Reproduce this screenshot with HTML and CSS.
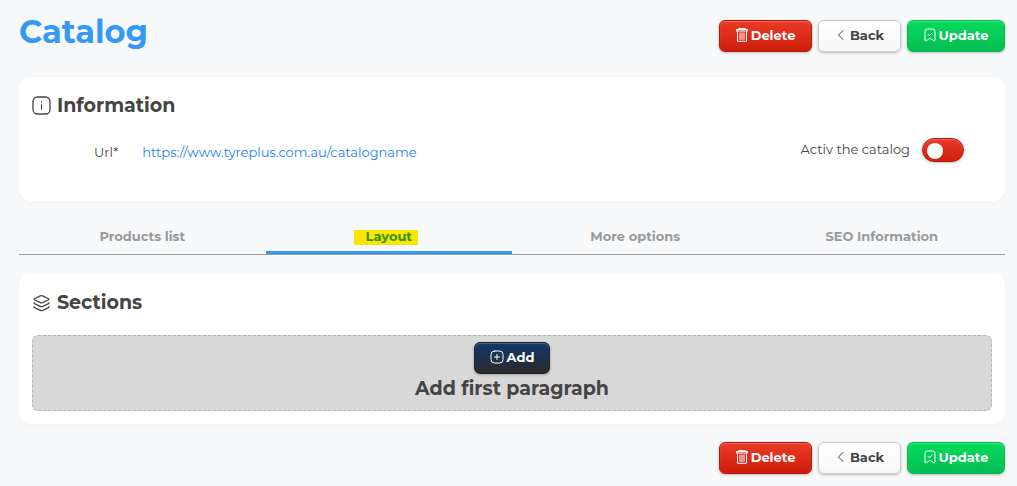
FILE: index.html
```html
<!DOCTYPE html>
<html lang="en">
<head>
    <meta charset="UTF-8">
    <meta name="viewport" content="width=device-width, initial-scale=1.0">
    <title>Catalog</title>
    <link rel="stylesheet" href="styles.css">
</head>
<body>
    <!-- Shared icons -->
    <svg class="sprite" aria-hidden="true">
        <symbol id="icon-trash" viewBox="0 0 12 14">
            <path d="M.5 1.500h11v1.500H.5zM1.500 3v10.300h9V3M4 5v6.500M6 5v6.500M8 5v6.500M2.500 1.500V.6h7v.9" />
        </symbol>
        <symbol id="icon-back" viewBox="0 0 12 14">
            <path d="M8 2.500L3.500 7l4.500 4.500" />
        </symbol>
        <symbol id="icon-save" viewBox="0 0 12 14">
            <path d="M1 12V3.500a2.500 2.500 0 0 1 2.500-2.500h5a2.500 2.500 0 0 1 2.500 2.500V12c0 .9-.8 1.100-1.500.6L7 10.900c-.7-.5-1.300-.5-2 0L2.500 12.600C1.800 13.100 1 12.900 1 12zM4 6.300l1.400 1.500L8.200 4.800" />
        </symbol>
    </svg>

    <main class="page">
        <header class="header">
            <h1>Catalog</h1>
            <div class="actions">
                <button type="button" class="btn btn-delete"><svg class="icon"><use href="#icon-trash" /></svg>Delete</button>
                <button type="button" class="btn btn-back"><svg class="icon"><use href="#icon-back" /></svg>Back</button>
                <button type="button" class="btn btn-update"><svg class="icon"><use href="#icon-save" /></svg>Update</button>
            </div>
        </header>

        <section class="card info-card">
            <h2>
                <svg class="title-icon" viewBox="0 0 20 20">
                    <rect x="1" y="1" width="17" height="17" rx="4.500" />
                    <path class="thin" d="M9.500 8.500v5M9.500 5.700v.6" />
                </svg>
                Information
            </h2>
            <div class="info-row">
                <div class="url-field">
                    <span class="url-label">Url*</span>
                    <a href="https://www.tyreplus.com.au/catalogname">https://www.tyreplus.com.au/catalogname</a>
                </div>
                <div class="switch-field">
                    <label for="active">Activ the catalog</label>
                    <input type="checkbox" id="active" class="switch">
                </div>
            </div>
        </section>

        <div class="tabs" role="tablist">
            <button type="button" class="tab" role="tab">Products list</button>
            <button type="button" class="tab active" role="tab" aria-selected="true"><mark>Layout</mark></button>
            <button type="button" class="tab" role="tab">More options</button>
            <button type="button" class="tab" role="tab">SEO Information</button>
        </div>

        <section class="card">
            <h2>
                <svg class="title-icon" viewBox="0 0 20 20">
                    <path d="M8.400 2.900c.7-.3 1.500-.3 2.200 0l5.600 2.600c.9.400.9 1.100 0 1.500l-5.600 2.600c-.7.300-1.500.3-2.200 0L2.800 7c-.9-.4-.9-1.100 0-1.500zM2 9.700c0 .6.300.9 1 1.200l5.200 2.400c.9.400 1.700.4 2.600 0l5.200-2.400c.7-.3 1-.6 1-1.200M2 13.700c0 .6.300.9 1 1.200l5.200 2.400c.9.400 1.700.4 2.600 0l5.200-2.400c.7-.3 1-.6 1-1.200" />
                </svg>
                Sections
            </h2>
            <div class="dropzone">
                <button type="button" class="btn btn-add">
                    <svg class="icon" viewBox="0 0 14 14">
                        <rect x="1" y="1" width="12" height="12" rx="3.500" />
                        <path d="M7 4.500v5M4.500 7h5" />
                    </svg>Add
                </button>
                <p>Add first paragraph</p>
            </div>
        </section>

        <footer class="actions">
            <button type="button" class="btn btn-delete"><svg class="icon"><use href="#icon-trash" /></svg>Delete</button>
            <button type="button" class="btn btn-back"><svg class="icon"><use href="#icon-back" /></svg>Back</button>
            <button type="button" class="btn btn-update"><svg class="icon"><use href="#icon-save" /></svg>Update</button>
        </footer>
    </main>
</body>
</html>
```
FILE: styles.css
```css
/* Global Styles and Reset */
* {
    margin: 0;
    padding: 0;
    box-sizing: border-box;
}

body {
    font-family: Montserrat, Inter, sans-serif;
    font-size: 13px;
    line-height: 20px;
    background-color: #f8f9fb;
    color: #444;
}

.sprite {
    display: none;
}

.page {
    padding: 12px 12px 12px 19px;
}

/* Header Section */
.header {
    display: flex;
    justify-content: space-between;
    align-items: flex-start;
    margin-bottom: 25px;
}

h1 {
    font-size: 32px;
    line-height: 40px;
    color: #3498f5;
}

.header .actions {
    margin-top: 8px;
}

.actions {
    display: flex;
    justify-content: flex-end;
    gap: 6px;
}

/* Buttons */
.btn {
    display: flex;
    justify-content: center;
    align-items: center;
    gap: 3px;
    height: 32px;
    padding-bottom: 2px;
    border: 1px solid;
    border-radius: 6px;
    font-family: inherit;
    font-size: 13px;
    font-weight: 700;
    color: #fff;
    box-shadow: 0 1px 3px rgba(0, 0, 0, 0.25), inset 0 1px 1px rgba(255, 255, 255, 0.25);
    cursor: pointer;
}

.btn-delete {
    width: 93px;
    background: linear-gradient(#ec3a28, #cf1d0c);
    border-color: #b5180a;
}

.btn-back {
    width: 83px;
    background: linear-gradient(#fff, #f7f7f7);
    border-color: #ccc;
    color: #444;
}

.btn-update {
    width: 98px;
    background: linear-gradient(#04da5d, #04bd51);
    border-color: #04bd51;
}

.btn-add {
    width: 76px;
    background: linear-gradient(#12366b, #2a2a2b);
    border-color: #222;
}

.icon,
.title-icon {
    fill: none;
    stroke: currentColor;
    stroke-linecap: round;
    stroke-linejoin: round;
}

.icon {
    width: 12px;
    height: 14px;
}

.btn-add .icon {
    width: 14px;
}

.title-icon {
    width: 20px;
    height: 20px;
    stroke-width: 1.3;
}

.title-icon .thin {
    stroke-width: 1;
}

/* Cards */
.card {
    padding: 19px 13px 13px;
    background: #fff;
    border-radius: 12px;
    box-shadow: 0 2px 8px rgba(0, 0, 0, 0.03);
    margin-bottom: 18px;
}

.info-card {
    padding-bottom: 39px;
}

h2 {
    display: flex;
    align-items: center;
    gap: 5px;
    font-size: 19px;
    line-height: 20px;
}

.info-row {
    display: flex;
    justify-content: space-between;
    align-items: flex-start;
    margin-top: 22px;
    padding: 0 28px 0 62px;
}

.url-field {
    display: flex;
    gap: 24px;
    margin-top: 4px;
}

.url-field a {
    color: #1a82f7;
    text-decoration: none;
}

.switch-field {
    display: flex;
    align-items: center;
    gap: 12px;
}

.switch-field label {
    padding-bottom: 2px;
}

/* Toggle switch */
.switch {
    appearance: none;
    display: flex;
    align-items: center;
    width: 42px;
    height: 24px;
    padding: 2px 4px 0;
    background: linear-gradient(#ec3a28, #cf1d0c);
    border: 1px solid #b5180a;
    border-radius: 12px;
    box-shadow: 0 1px 3px rgba(0, 0, 0, 0.25), inset 0 1px 1px rgba(255, 255, 255, 0.25);
    cursor: pointer;
}

.switch::before {
    content: "";
    width: 16px;
    height: 16px;
    background: #fff;
    border-radius: 50%;
}

.switch:checked {
    justify-content: flex-end;
    background: #04bd51;
    border-color: #04bd51;
}

/* Tabs */
.tabs {
    display: grid;
    grid-template-columns: repeat(4, 1fr);
    border-bottom: 1px solid #999;
    margin-bottom: 19px;
}

.tab {
    height: 35px;
    padding-top: 1px;
    background: none;
    border: none;
    border-bottom: 3px solid transparent;
    font-family: inherit;
    font-size: 13px;
    font-weight: 700;
    color: #999;
    cursor: pointer;
}

.tab.active {
    border-bottom-color: #3498f5;
}

.tab mark {
    margin-left: -12px;
    margin-right: -6px;
    padding: 0 6px 1px 12px;
    background: linear-gradient(transparent 2px, #fae600 2px);
    color: #359400;
}

/* Sections */
.dropzone {
    display: flex;
    flex-direction: column;
    align-items: center;
    margin-top: 22px;
    padding: 6px 6px 9px;
    background: #d8d8d8;
    border: 1px dashed #b0b3b8;
    border-radius: 6px;
}

.dropzone p {
    margin-top: 3px;
    font-size: 19px;
    font-weight: 700;
    line-height: 24px;
}
```
